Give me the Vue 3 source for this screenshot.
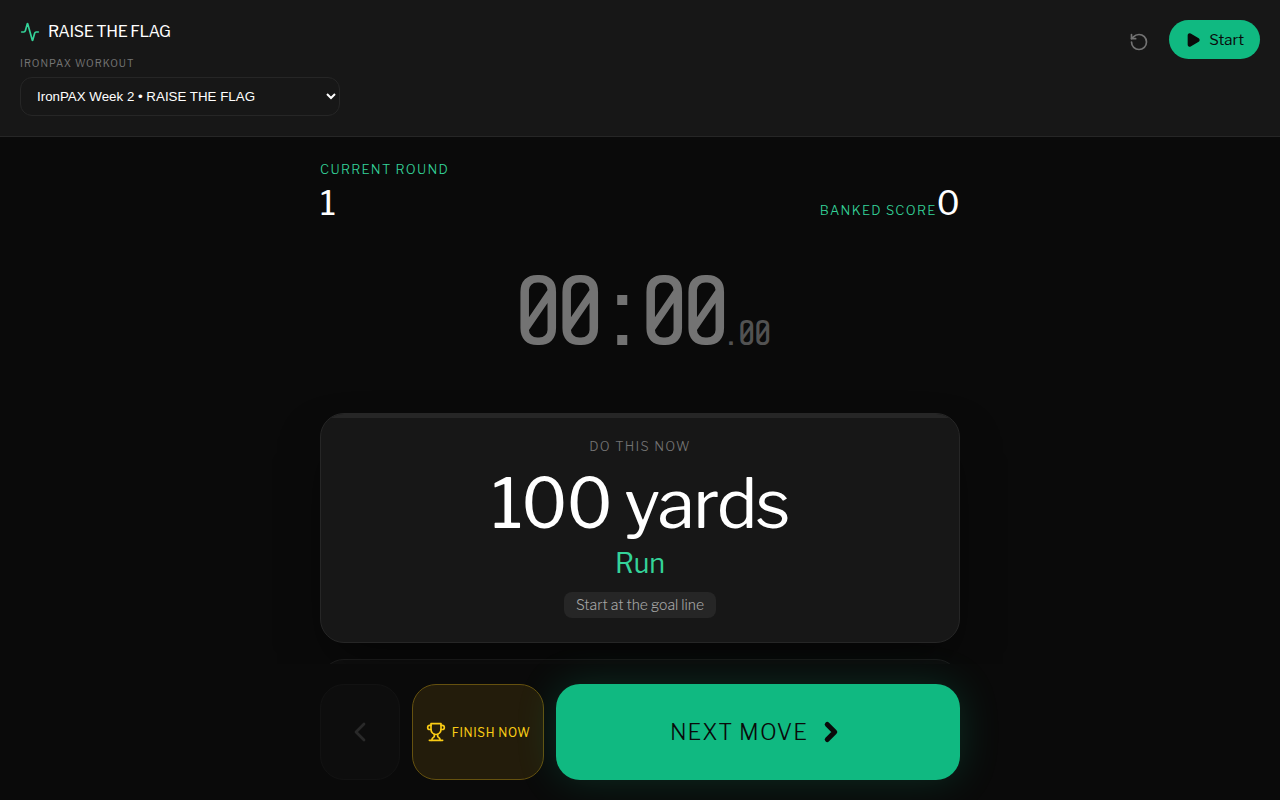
<template>
  <div class="workout-app">
    <header class="top-bar">
      <div class="top-left">
        <div class="brand">
          <svg class="brand-icon" viewBox="0 0 24 24" aria-hidden="true">
            <path d="M22 12h-2.48a2 2 0 0 0-1.93 1.46l-2.35 8.36a.25.25 0 0 1-.48 0L9.24 2.18a.25.25 0 0 0-.48 0l-2.35 8.36A2 2 0 0 1 4.49 12H2" />
          </svg>
          <h1>{{ workout.name }}</h1>
        </div>
        <label class="picker-label" for="workout">IronPAX Workout</label>
        <select id="workout" v-model="selectedId" class="picker">
          <option v-for="w in workouts" :key="w.id" :value="w.id">
            {{ w.week }} • {{ w.name }}
          </option>
        </select>
      </div>

      <div class="top-actions">
        <button class="reset-btn" type="button" aria-label="Reset" @click="reset">
          <svg viewBox="0 0 24 24" aria-hidden="true">
            <path d="M3 12a9 9 0 1 0 9-9 9.75 9.75 0 0 0-6.74 2.74L3 8" />
            <path d="M3 3v5h5" />
          </svg>
        </button>
        <button class="start-btn" type="button">
          <svg viewBox="0 0 24 24" aria-hidden="true">
            <path d="M5 5a2 2 0 0 1 3.008-1.728l11.997 6.998a2 2 0 0 1 .003 3.458l-12 7A2 2 0 0 1 5 19z" />
          </svg>
          Start
        </button>
      </div>
    </header>

    <main class="content">
      <div class="column">
        <section class="stats">
          <div>
            <div class="stat-label">Current Round</div>
            <div class="stat-value">{{ round }}</div>
          </div>
          <div class="banked">
            <span class="stat-label">Banked Score</span>
            <span class="stat-value">{{ score }}</span>
          </div>
        </section>

        <div class="timer">
          <span class="timer-main">00:00</span><span class="timer-sub">.00</span>
        </div>

        <section class="move-card">
          <div class="move-label">Do This Now</div>
          <div class="move-amount">{{ move.amount }}</div>
          <div class="move-name">{{ move.name }}</div>
          <div class="move-note">{{ move.note }}</div>
        </section>

        <section class="next-card"></section>
      </div>
    </main>

    <footer class="bottom-bar">
      <div class="controls">
        <button class="back-btn" type="button" aria-label="Previous move" disabled>
          <svg viewBox="0 0 24 24" aria-hidden="true"><path d="m15 18-6-6 6-6" /></svg>
        </button>
        <button class="finish-btn" type="button">
          <svg viewBox="0 0 24 24" aria-hidden="true">
            <path d="M6 9H4.5a2.5 2.5 0 0 1 0-5H6" />
            <path d="M18 9h1.5a2.5 2.5 0 0 0 0-5H18" />
            <path d="M4 22h16" />
            <path d="M10 14.66V17c0 .55-.47.98-.97 1.21C7.85 18.75 7 20.24 7 22" />
            <path d="M14 14.66V17c0 .55.47.98.97 1.21C16.15 18.75 17 20.24 17 22" />
            <path d="M18 2H6v7a6 6 0 0 0 12 0V2Z" />
          </svg>
          Finish Now
        </button>
        <button class="next-btn" type="button">
          Next Move
          <svg viewBox="0 0 24 24" aria-hidden="true"><path d="m9 18 6-6-6-6" /></svg>
        </button>
      </div>
    </footer>
  </div>
</template>

<script setup>
import { computed, ref } from 'vue';

const workouts = [
  { id: 'week-2', week: 'IronPAX Week 2', name: 'RAISE THE FLAG' }
];

const selectedId = ref('week-2');
const workout = computed(() => workouts.find((w) => w.id === selectedId.value));

const round = ref(1);
const score = ref(0);
const move = { amount: '100 yards', name: 'Run', note: 'Start at the goal line' };

function reset() {
  round.value = 1;
  score.value = 0;
}
</script>

<style>
body {
  margin: 0;
  background: #0a0a0a;
}
</style>

<style scoped>
.workout-app {
  display: flex;
  flex-direction: column;
  height: 100vh;
  background: #0a0a0a;
  color: #fff;
  font-family: "Libre Franklin", "Liberation Sans", sans-serif;
  font-size: 16px;
  line-height: 24px;
}

button {
  display: flex;
  align-items: center;
  justify-content: center;
  margin: 0;
  font-family: inherit;
  cursor: pointer;
}

svg {
  flex-shrink: 0;
  width: 20px;
  height: 20px;
  fill: none;
  stroke: currentColor;
  stroke-width: 2;
  stroke-linecap: round;
  stroke-linejoin: round;
}

.top-bar {
  display: flex;
  align-items: flex-start;
  justify-content: space-between;
  padding: 20px;
  background: #171717;
  border-bottom: 1px solid #262626;
}

.top-left {
  display: flex;
  flex-direction: column;
  width: 320px;
}

.brand {
  display: flex;
  align-items: center;
  gap: 8px;
}

.brand-icon {
  color: #34d399;
}

h1 {
  margin: 0;
  font-size: 16px;
  font-weight: 400;
  line-height: 24px;
  letter-spacing: -0.025em;
}

.picker-label {
  margin: 11px 0 6px;
  color: #737373;
  font-size: 10px;
  line-height: 16px;
  letter-spacing: 0.1em;
  text-transform: uppercase;
}

.picker {
  box-sizing: border-box;
  width: 100%;
  height: 39px;
  padding: 0 0 0 12px;
  background: #171717;
  border: 1px solid #262626;
  border-radius: 12px;
  color: #fff;
}

.top-actions {
  display: flex;
  gap: 12px;
}

.reset-btn {
  width: 36px;
  height: 44px;
  padding: 0;
  background: none;
  border: 0;
  color: #737373;
}

.start-btn {
  gap: 8px;
  height: 39px;
  padding: 0 16px;
  background: #10b981;
  border: 0;
  border-radius: 20px;
  color: #0a0a0a;
  font-size: 15px;
}

.start-btn svg {
  width: 16px;
  height: 16px;
  fill: currentColor;
}

.content {
  flex: 1;
  min-height: 0;
  overflow-y: auto;
  scrollbar-width: none;
}

.column,
.controls {
  max-width: 640px;
  margin: 0 auto;
}

.column {
  padding-top: 22px;
}

.stats {
  display: flex;
  align-items: flex-end;
  justify-content: space-between;
}

.stat-label,
.move-label {
  font-size: 13px;
  font-weight: 300;
  line-height: 20px;
  letter-spacing: 0.1em;
  text-transform: uppercase;
}

.stat-label {
  color: #34d399;
}

.stat-value {
  font-size: 34px;
  line-height: 48px;
}

.banked {
  display: flex;
  align-items: baseline;
}

.timer {
  display: flex;
  align-items: baseline;
  justify-content: center;
  margin: 38px 0 31px;
  font-family: "Share Tech Mono", "Liberation Mono", monospace;
  line-height: 96px;
  letter-spacing: -0.1em;
}

.timer-main {
  color: #737373;
  font-size: 100px;
  letter-spacing: -0.12em;
}

.timer-sub {
  color: #525252;
  font-size: 36px;
  letter-spacing: -0.1em;
}

.move-card {
  position: relative;
  display: flex;
  flex-direction: column;
  align-items: center;
  padding: 22px 24px 24px;
  overflow: hidden;
  background: #171717;
  border: 1px solid #262626;
  border-radius: 24px;
  box-shadow: 0 25px 50px -12px rgba(0, 0, 0, 0.5);
  text-align: center;
}

/* progress track along the top edge */
.move-card::before {
  content: '';
  position: absolute;
  top: 0;
  right: 0;
  left: 0;
  height: 4px;
  background: #262626;
}

.move-label {
  color: #737373;
}

.move-amount {
  margin-top: 12px;
  font-size: 68px;
  line-height: 72px;
  letter-spacing: -0.025em;
}

.move-name {
  margin-top: 6px;
  color: #34d399;
  font-size: 27px;
  line-height: 36px;
}

.move-note {
  margin-top: 10px;
  padding: 3px 12px;
  background: #262626;
  border-radius: 8px;
  color: #a3a3a3;
  font-size: 14px;
  font-weight: 300;
  line-height: 20px;
}

.next-card {
  min-height: 96px;
  margin-top: 16px;
  background: #0f0f0f;
  border: 1px solid #1f1f1f;
  border-radius: 24px;
}

.bottom-bar {
  padding: 20px;
}

.controls {
  display: flex;
  gap: 12px;
}

.controls button {
  height: 96px;
  padding: 0;
  border-radius: 24px;
  text-transform: uppercase;
}

.back-btn {
  width: 80px;
  background: #171717;
  border: 1px solid #262626;
  color: #737373;
  opacity: 0.3;
}

.back-btn svg {
  width: 32px;
  height: 32px;
}

.finish-btn {
  gap: 6px;
  width: 132px;
  background: #231c0b;
  border: 1px solid #65510f;
  color: #facc15;
  font-size: 12px;
  letter-spacing: 0.05em;
}

.next-btn {
  flex: 1;
  gap: 8px;
  background: #10b981;
  border: 0;
  box-shadow: 0 0 40px rgba(16, 185, 129, 0.2);
  color: #0a0a0a;
  font-size: 22px;
  font-weight: 300;
  letter-spacing: 0.05em;
}

.next-btn svg {
  width: 30px;
  height: 30px;
  stroke-width: 4;
}
</style>
